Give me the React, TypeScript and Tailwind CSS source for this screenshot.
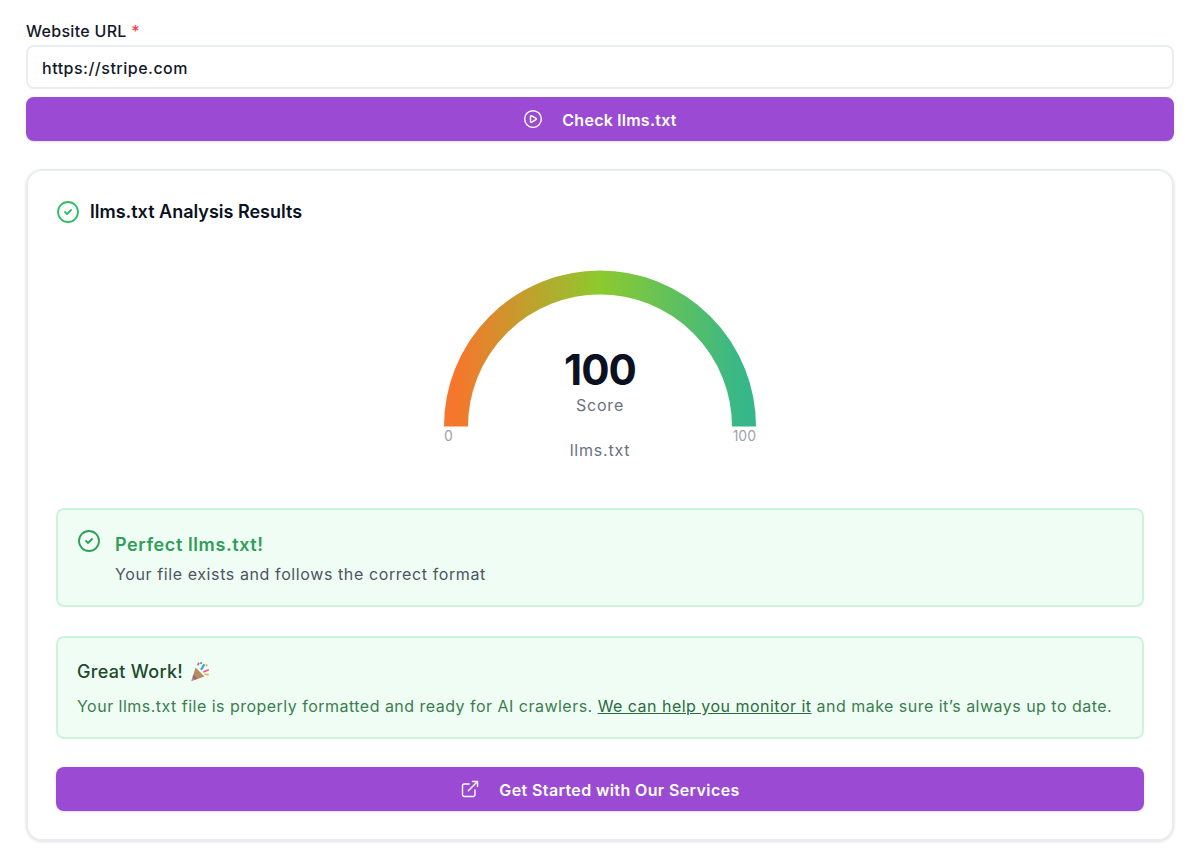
import { CheckCircle2, ExternalLink, PlayCircle } from "lucide-react";

function Gauge() {
  return (
    <div className="relative w-[312px] h-[200px] mx-auto">
      <svg width="312" height="157" viewBox="0 0 312 157" className="block">
        <defs>
          <linearGradient id="gaugeGradient" x1="0" y1="0" x2="1" y2="0">
            <stop offset="0%" stopColor="#f5762c" />
            <stop offset="50%" stopColor="#8cca2e" />
            <stop offset="100%" stopColor="#36b78a" />
          </linearGradient>
        </defs>
        <path d="M12 156.5 A144 144 0 0 1 300 156.5" fill="none" stroke="url(#gaugeGradient)" strokeWidth="24" />
      </svg>
      <div className="absolute left-0 right-0 top-[75px] flex flex-col items-center">
        <span className="text-[42px] leading-[50px] font-bold text-[#0b1120] tracking-[-1px]">100</span>
        <span className="text-base leading-[20px] text-[#6b7280] tracking-[0.8px]">Score</span>
      </div>
      <div className="flex justify-between text-sm leading-4 text-[#9ca3af] mt-[1px]">
        <span>0</span>
        <span>100</span>
      </div>
      <div className="text-center text-base leading-5 text-[#6b7280] tracking-[0.8px] -mt-[4px]">llms.txt</div>
    </div>
  );
}

function PartyPopper() {
  return (
    <svg width="22" height="22" viewBox="0 0 20 20" className="inline-block">
      <path d="M2 18.5 L6 6 L14 14 Z" fill="#b98a5e" />
      <path d="M4 12.5 L7.5 16 L5.5 17 L3.3 14.7 Z" fill="#8d5fb0" />
      <path d="M8 4 L9 1.5" stroke="#e8559a" strokeWidth="1.6" />
      <path d="M11 8 L14 3" stroke="#3b9fe0" strokeWidth="2" />
      <path d="M13 10 L18 8" stroke="#e8559a" strokeWidth="1.6" />
      <path d="M14 12 L18 12.5" stroke="#f2b632" strokeWidth="1.6" />
      <circle cx="16" cy="4" r="1" fill="#f2b632" />
      <circle cx="11" cy="2" r="1" fill="#35b58a" />
    </svg>
  );
}

export default function App() {
  return (
    <div className="w-[1200px] h-[853px] bg-white px-[26px] pt-[21px] font-['Inter',sans-serif] overflow-hidden">
      <label className="block text-base leading-[20px] font-medium text-[#111827] tracking-[0.3px]">
        Website URL <span className="text-[#ef4444]">*</span>
      </label>
      <div className="mt-[4px] h-[44px] flex items-center rounded-lg border-2 border-[#e9edf2] bg-white px-[14px] pt-[2px] text-base font-medium text-[#111827] tracking-[0.5px]">
        https://stripe.com
      </div>
      <button className="mt-2 w-full h-[44px] flex items-center justify-center gap-[19px] rounded-lg bg-[#9b4ad3] text-white text-base font-semibold tracking-[0.25px] shadow-sm">
        <PlayCircle size={20} strokeWidth={1.7} />
        <span className="pt-[1px]">Check llms.txt</span>
      </button>

      <div className="mt-[28px] h-[672px] rounded-2xl border-2 border-[#e9edf2] shadow-[0_1px_3px_rgba(0,0,0,0.12)] bg-white px-[28px] pt-[28px]">
        <div className="flex items-center gap-[10px] h-[26px]">
          <CheckCircle2 size={24} strokeWidth={1.8} className="text-[#2fbf68]" />
          <h2 className="text-lg font-semibold text-[#0b1120] -mt-[1px]">llms.txt Analysis Results</h2>
        </div>

        <div className="mt-[45px]">
          <Gauge />
        </div>

        <div className="mt-[38px] h-[99px] rounded-lg border-2 border-[#cdf4db] bg-[#f0fdf4] px-[19px] pt-[19px] flex gap-[14px]">
          <CheckCircle2 size={24} strokeWidth={1.8} className="text-[#2f9e58] shrink-0" />
          <div>
            <div className="text-lg leading-[30px] font-semibold text-[#2f9e58] tracking-[0.6px] pt-[1px]">Perfect llms.txt!</div>
            <div className="text-base leading-[29px] text-[#4b5563] tracking-[0.6px]">Your file exists and follows the correct format</div>
          </div>
        </div>

        <div className="mt-[29px] h-[103px] rounded-lg border-2 border-[#cdf4db] bg-[#f0fdf4] px-[19px] pt-[20px]">
          <div className="flex items-center gap-[6px] text-lg leading-[28px] font-medium text-[#1d4a2e] tracking-[0.3px]">
            Great Work! <PartyPopper />
          </div>
          <p className="mt-[6px] text-base leading-[28px] text-[#3a7d50] tracking-[0.48px]">
            Your llms.txt file is properly formatted and ready for AI crawlers. <span className="underline text-[#2a6b3f]">We can help you monitor it</span> and make sure it’s always up to date.
          </p>
        </div>

        <button className="mt-[28px] w-full h-[44px] flex items-center justify-center gap-[19px] rounded-lg bg-[#9b4ad3] text-white text-base font-semibold tracking-[0.38px] shadow-sm">
          <ExternalLink size={20} strokeWidth={1.7} />
          <span className="pt-[1px]">Get Started with Our Services</span>
        </button>
      </div>
    </div>
  );
}
